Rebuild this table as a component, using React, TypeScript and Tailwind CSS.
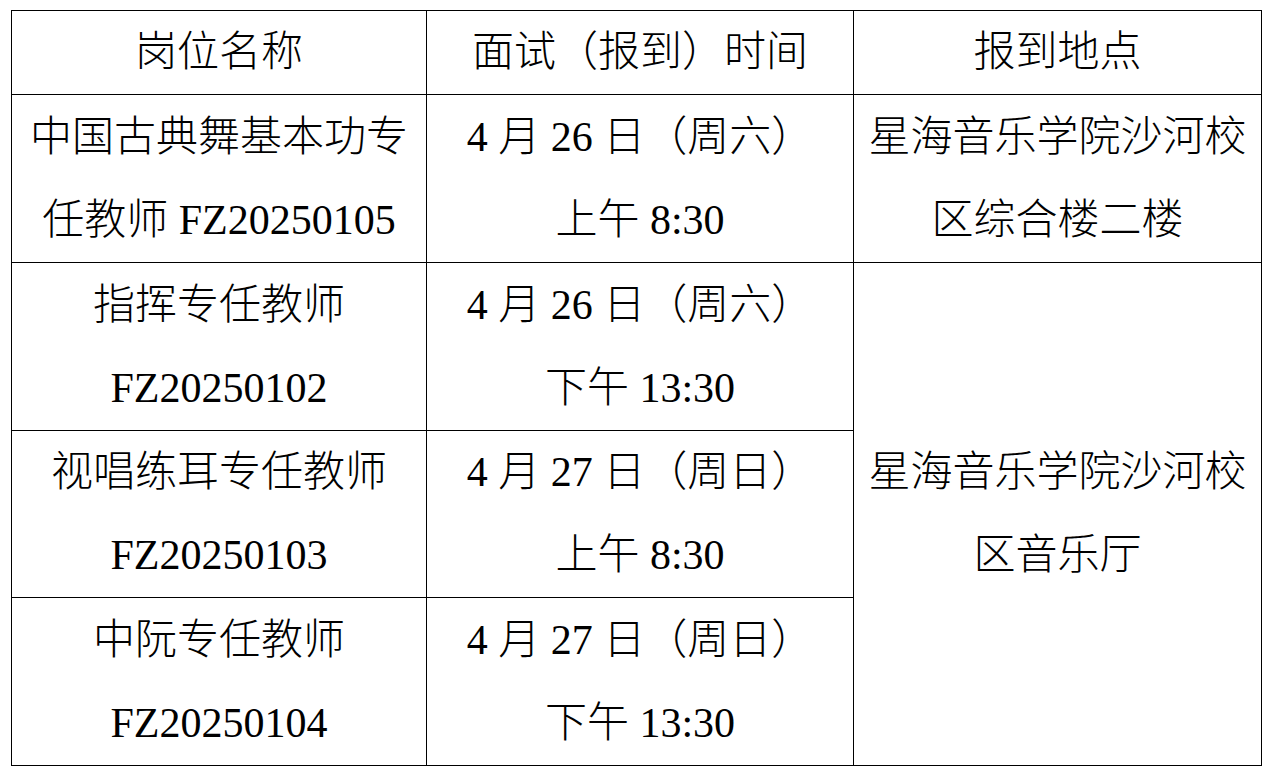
type Cell = {
  lines: string[];
  rowSpan?: number;
};

const rows: Cell[][] = [
  [{ lines: ['岗位名称'] }, { lines: ['面试（报到）时间'] }, { lines: ['报到地点'] }],
  [
    { lines: ['中国古典舞基本功专', '任教师 FZ20250105'] },
    { lines: ['4 月 26 日（周六）', '上午 8:30'] },
    { lines: ['星海音乐学院沙河校', '区综合楼二楼'] },
  ],
  [
    { lines: ['指挥专任教师', 'FZ20250102'] },
    { lines: ['4 月 26 日（周六）', '下午 13:30'] },
    { lines: ['星海音乐学院沙河校', '区音乐厅'], rowSpan: 3 },
  ],
  [{ lines: ['视唱练耳专任教师', 'FZ20250103'] }, { lines: ['4 月 27 日（周日）', '上午 8:30'] }],
  [{ lines: ['中阮专任教师', 'FZ20250104'] }, { lines: ['4 月 27 日（周日）', '下午 13:30'] }],
];

// latin runs stay regular, CJK runs get the lighter face
function Line({ text }: { text: string }) {
  const parts = text.split(/([A-Za-z0-9: ]+)/).filter(Boolean);
  return (
    <div className="whitespace-pre">
      {parts.map((part, i) =>
        /^[A-Za-z0-9: ]+$/.test(part) ? (
          <span key={i} className="font-normal">
            {part}
          </span>
        ) : (
          <span key={i} className="font-light">
            {part}
          </span>
        )
      )}
    </div>
  );
}

function TableCell({ cell }: { cell: Cell }) {
  return (
    <div
      className={`flex flex-col items-center justify-center border-r border-b border-black ${
        cell.rowSpan === 3 ? 'row-span-3' : ''
      }`}
    >
      {cell.lines.map((line) => (
        <Line key={line} text={line} />
      ))}
    </div>
  );
}

export default function App() {
  return (
    <div className="min-h-[775px] w-full bg-white pt-[10px] pl-[11px]">
      <div
        className="grid w-[1251px] grid-cols-[415px_427px_408px] grid-rows-[84px_168px_168px_167px_168px] border-t border-l border-black text-[42px] leading-[83px] text-black"
        style={{ fontFamily: '"Liberation Serif", "Noto Sans CJK SC", serif' }}
      >
        {rows.map((row, i) =>
          row.map((cell, j) => <TableCell key={`${i}-${j}`} cell={cell} />)
        )}
      </div>
    </div>
  );
}
